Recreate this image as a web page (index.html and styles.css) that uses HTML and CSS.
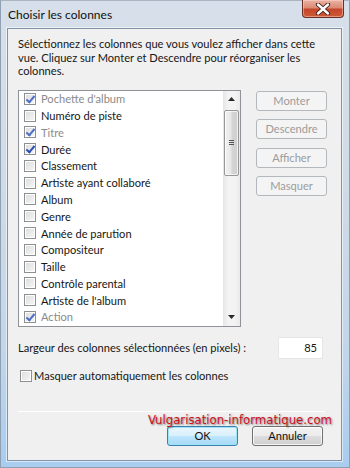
FILE: index.html
```html
<!DOCTYPE html>
<html lang="fr">
<head>
<meta charset="utf-8">
<title>Choisir les colonnes</title>
<link rel="stylesheet" href="styles.css">
</head>
<body>
<div class="window">
  <div class="titlebar">
    <span class="title">Choisir les colonnes</span>
    <div class="close">
      <svg width="18" height="12" viewBox="0 0 18 12">
        <path d="M4 1.5 L14 10.5 M14 1.5 L4 10.5" stroke="#3a1a14" stroke-width="4.2" stroke-linecap="round" fill="none"/>
        <path d="M4 1.5 L14 10.5 M14 1.5 L4 10.5" stroke="#ffffff" stroke-width="2.4" stroke-linecap="round" fill="none"/>
      </svg>
    </div>
  </div>
  <div class="client">
    <p class="desc">Sélectionnez les colonnes que vous voulez afficher dans cette vue. Cliquez sur Monter et Descendre pour réorganiser les colonnes.</p>
    <div class="main">
      <div class="listbox">
        <ul class="items">
          <li class="item disabled"><span class="cb checked"></span>Pochette d'album</li>
          <li class="item"><span class="cb"></span>Numéro de piste</li>
          <li class="item disabled"><span class="cb checked"></span>Titre</li>
          <li class="item"><span class="cb checked"></span>Durée</li>
          <li class="item"><span class="cb"></span>Classement</li>
          <li class="item"><span class="cb"></span>Artiste ayant collaboré</li>
          <li class="item"><span class="cb"></span>Album</li>
          <li class="item"><span class="cb"></span>Genre</li>
          <li class="item"><span class="cb"></span>Année de parution</li>
          <li class="item"><span class="cb"></span>Compositeur</li>
          <li class="item"><span class="cb"></span>Taille</li>
          <li class="item"><span class="cb"></span>Contrôle parental</li>
          <li class="item"><span class="cb"></span>Artiste de l'album</li>
          <li class="item disabled"><span class="cb checked"></span>Action</li>
        </ul>
        <div class="scrollbar">
          <div class="arrow">
            <svg width="7" height="4" viewBox="0 0 7 4"><path d="M0 4 L3.5 0 L7 4 Z" fill="#2b2b2b"/></svg>
          </div>
          <div class="thumb">
            <span class="grip"></span>
          </div>
          <div class="track"></div>
          <div class="arrow">
            <svg width="7" height="4" viewBox="0 0 7 4"><path d="M0 0 L7 0 L3.5 4 Z" fill="#2b2b2b"/></svg>
          </div>
        </div>
      </div>
      <div class="side">
        <div class="btn disabled">Monter</div>
        <div class="btn disabled">Descendre</div>
        <div class="btn disabled spaced">Afficher</div>
        <div class="btn disabled">Masquer</div>
      </div>
    </div>
    <div class="width-row">
      <span class="label">Largeur des colonnes sélectionnées (en pixels) :</span>
      <div class="num">85</div>
    </div>
    <div class="auto-row"><span class="cb"></span>Masquer automatiquement les colonnes</div>
    <div class="separator"></div>
    <div class="footer">
      <div class="btn default">OK</div>
      <div class="btn">Annuler</div>
    </div>
    <div class="watermark">Vulgarisation-informatique.com</div>
  </div>
</div>
</body>
</html>
```

FILE: styles.css
```css
* { box-sizing: border-box; }
html, body { margin: 0; padding: 0; }
body {
  width: 350px;
  height: 468px;
  overflow: hidden;
  font-family: "Lato", "Noto Sans", sans-serif;
  font-size: 11.1px;
  color: #161616;
}
.window {
  width: 350px;
  height: 468px;
  display: flex;
  flex-direction: column;
  background: linear-gradient(to bottom, #d7e0ea 0%, #cfdbe7 40%, #c2d6ea 75%, #a8cdef 100%);
  border: 1px solid #8ea0b2;
  border-top-color: #a9b5c1;
}
.titlebar {
  height: 27px;
  flex: none;
  display: flex;
  align-items: flex-start;
  justify-content: space-between;
  padding-left: 7px;
}
.title {
  margin-top: 6px;
  font-size: 12px;
  color: #101010;
}
.close {
  width: 42px;
  height: 18px;
  margin-right: 5px;
  margin-top: -1px;
  border: 1px solid #6b2f23;
  border-top: none;
  border-radius: 0 0 4px 4px;
  background: linear-gradient(to bottom, #eab3a4 0%, #dc8a73 45%, #c4462b 55%, #cf5a36 100%);
  box-shadow: inset 0 0 0 1px rgba(255,220,210,0.45);
  display: flex;
  align-items: center;
  justify-content: center;
}
.client {
  position: relative;
  flex: none;
  margin: 0 7px 6px 6px;
  width: 335px;
  height: 433px;
  background: #f0f0f0;
  border: 1px solid #8193a6;
  box-shadow: 0 0 0 1px rgba(255,255,255,0.55);
}
.desc {
  margin: 0;
  padding: 8px 14px 0 10px;
  line-height: 13.5px;
}
.main {
  display: flex;
  gap: 15px;
  margin-top: 12px;
  padding-left: 10px;
}
.listbox {
  width: 223px;
  height: 237px;
  border: 1px solid #8f9296;
  background: #fff;
  display: flex;
  overflow: hidden;
}
.items {
  list-style: none;
  margin: 0;
  padding: 0 0 0 5px;
  flex: 1;
}
.item {
  height: 16.77px;
  display: flex;
  align-items: center;
  gap: 5px;
  white-space: nowrap;
}
.item.disabled { color: #8a8a8a; }
.cb {
  width: 12px;
  height: 12px;
  flex: none;
  border: 1px solid #8e8f8f;
  background: linear-gradient(135deg, #dcdcdc 0%, #ececec 60%, #f8f8f8 100%);
  box-shadow: inset 0 0 0 1px #fff;
  position: relative;
}
.cb.checked::after {
  content: "";
  position: absolute;
  left: 3px;
  top: 0px;
  width: 3px;
  height: 7px;
  border: solid #2a4fb3;
  border-width: 0 2px 2px 0;
  transform: rotate(40deg);
}
.item.disabled .cb.checked::after { border-color: #4f6fc6; }
.scrollbar {
  width: 17px;
  flex: none;
  display: flex;
  flex-direction: column;
  background: linear-gradient(to right, #e5e5e5, #f3f3f3 30%, #f3f3f3 70%, #eaeaea);
}
.arrow {
  height: 17px;
  flex: none;
  display: flex;
  align-items: center;
  justify-content: center;
}
.thumb {
  margin: 2px 1px 0 1px;
  height: 66px;
  flex: none;
  border: 1px solid #979797;
  border-radius: 2px;
  background: linear-gradient(to right, #f2f2f2 0%, #e6e6e6 45%, #d4d4d4 55%, #cfcfcf 100%);
  box-shadow: inset 0 0 0 1px rgba(255,255,255,0.7);
  display: flex;
  align-items: center;
  justify-content: center;
}
.grip {
  width: 5px;
  height: 5px;
  background: repeating-linear-gradient(to bottom, #555 0, #555 1px, transparent 1px, transparent 2px);
}
.track { flex: 1; }
.side {
  display: flex;
  flex-direction: column;
  gap: 8px;
  padding-top: 1px;
}
.btn {
  width: 71px;
  height: 20px;
  border: 1px solid #707070;
  border-radius: 3px;
  display: flex;
  align-items: center;
  justify-content: center;
  background: linear-gradient(to bottom, #f2f2f2 0%, #ebebeb 50%, #dddddd 51%, #cfcfcf 100%);
  box-shadow: inset 0 0 0 1px rgba(255,255,255,0.8);
  color: #111;
}
.btn.disabled {
  border-color: #b3b8bc;
  background: #f4f4f4;
  color: #9c9c9c;
  box-shadow: none;
}
.btn.spaced { margin-top: 1px; }
.width-row {
  display: flex;
  align-items: center;
  justify-content: space-between;
  margin-top: 10px;
  padding: 0 18px 0 10px;
  height: 22px;
}
.num {
  width: 45px;
  height: 22px;
  background: #fff;
  border: 1px solid #e6e6e6;
  text-align: right;
  padding: 3px 5px 0 0;
}
.auto-row {
  display: flex;
  align-items: center;
  gap: 2px;
  margin-top: 10px;
  padding-left: 12px;
  height: 14px;
}
.separator {
  margin: 28px 16px 0 10px;
  height: 1px;
  background: #a0a0a0;
  border-bottom: 1px solid #fff;
}
.footer {
  display: flex;
  justify-content: flex-end;
  gap: 14px;
  padding-right: 18px;
  margin-top: 14px;
}
.btn.default {
  border-color: #3c7fb1;
  background: linear-gradient(to bottom, #eaf6fd 0%, #d9f0fc 50%, #bee6fd 51%, #a7d9f5 100%);
  box-shadow: inset 0 0 0 1px #9ee4f7;
}
.watermark {
  position: absolute;
  left: 140px;
  top: 383px;
  font-family: "DejaVu Sans", sans-serif;
  font-stretch: condensed;
  font-size: 13px;
  color: #d0101c;
  text-shadow: 1px 1px 2px rgba(0,0,0,0.55);
  white-space: nowrap;
}
```
